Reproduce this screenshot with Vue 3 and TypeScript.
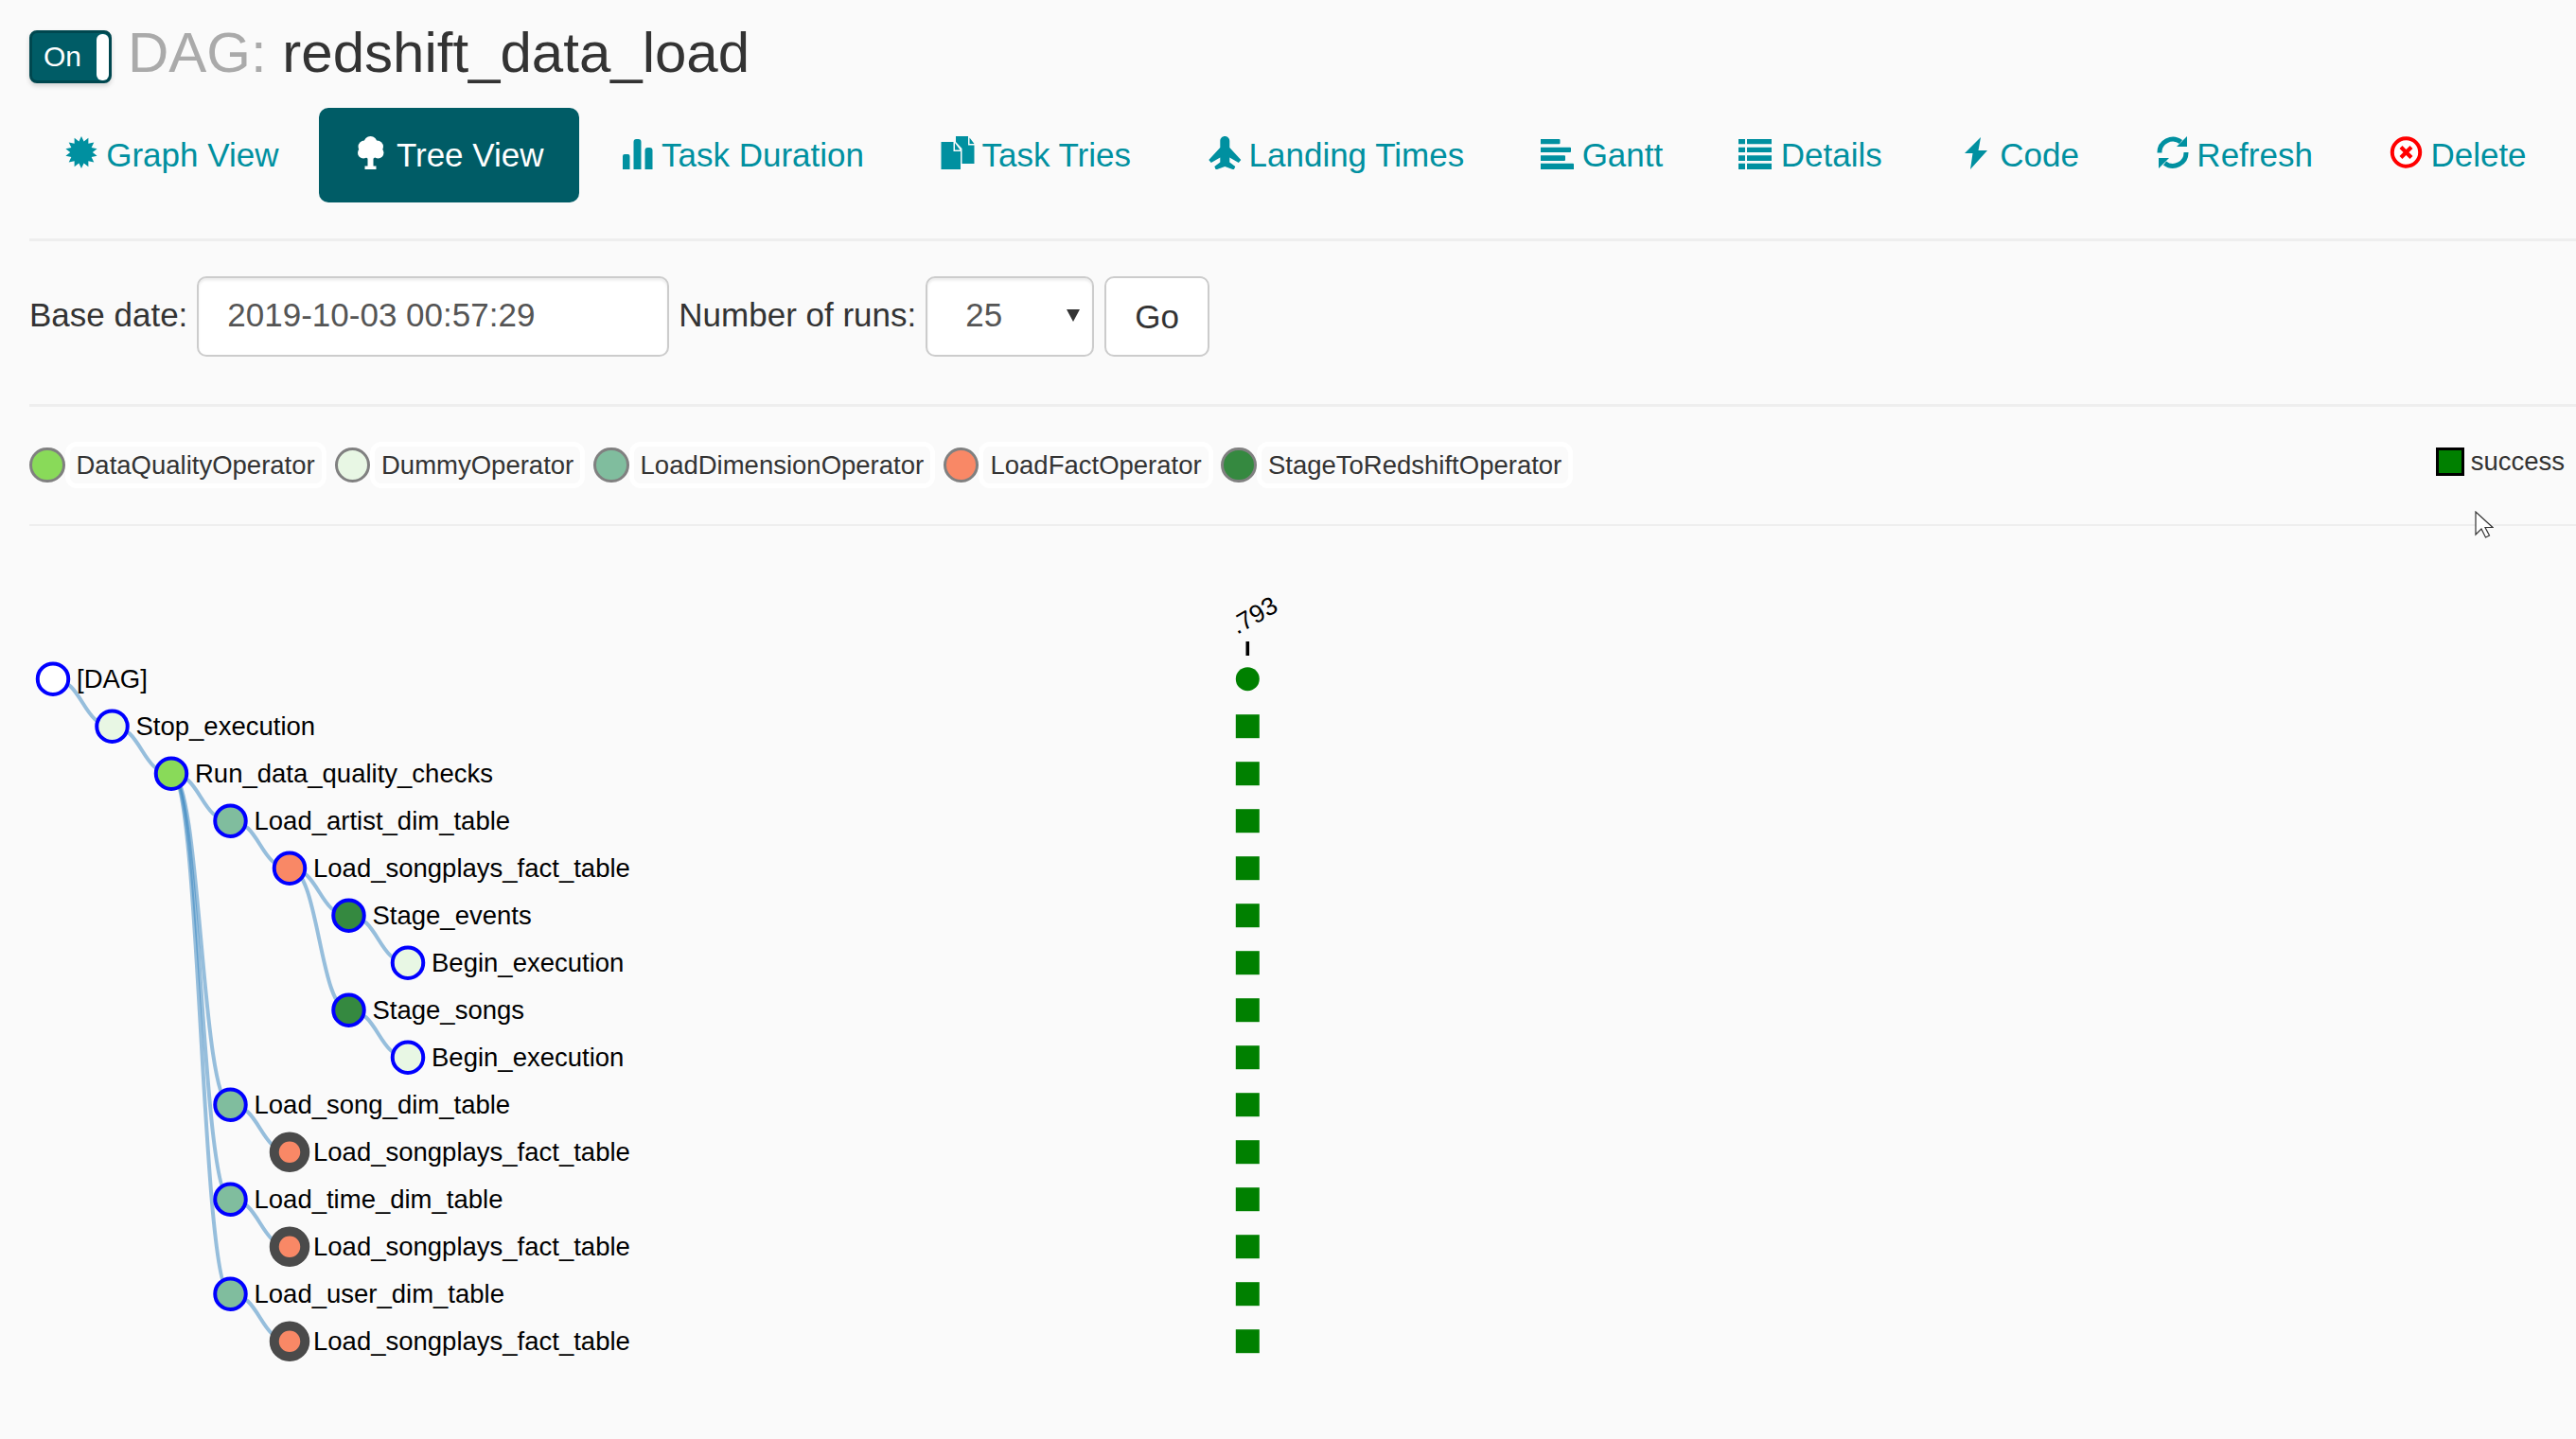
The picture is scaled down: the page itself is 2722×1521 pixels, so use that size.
<script setup lang="ts">
interface NavItem { label: string; icon: string; active?: boolean }
interface LegendItem { label: string; color: string }
interface TreeRow { label: string; depth: number; fill: string; parent: number; collapsed?: boolean }

const DUMMY = '#e8f7e4'
const QUALITY = '#89da59'
const DIM = '#80bd9e'
const FACT = '#f98866'
const STAGE = '#358940'

function starPoints(): string {
  const pts: string[] = []
  const n = 14
  for (let i = 0; i < n * 2; i++) {
    const r = i % 2 === 0 ? 17 : 11.8
    const a = (Math.PI * i) / n - Math.PI / 2
    pts.push(`${(18 + r * Math.cos(a)).toFixed(2)},${(17 + r * Math.sin(a)).toFixed(2)}`)
  }
  return pts.join(' ')
}
const star = starPoints()

const navItems: NavItem[] = [
  { label: 'Graph View', icon: 'graph' },
  { label: 'Tree View', icon: 'tree', active: true },
  { label: 'Task Duration', icon: 'bars' },
  { label: 'Task Tries', icon: 'tries' },
  { label: 'Landing Times', icon: 'plane' },
  { label: 'Gantt', icon: 'gantt' },
  { label: 'Details', icon: 'details' },
  { label: 'Code', icon: 'code' },
  { label: 'Refresh', icon: 'refresh' },
  { label: 'Delete', icon: 'delete' },
]

const legend: LegendItem[] = [
  { label: 'DataQualityOperator', color: QUALITY },
  { label: 'DummyOperator', color: DUMMY },
  { label: 'LoadDimensionOperator', color: DIM },
  { label: 'LoadFactOperator', color: FACT },
  { label: 'StageToRedshiftOperator', color: STAGE },
]

const rows: TreeRow[] = [
  { label: '[DAG]', depth: 0, fill: '#ffffff', parent: -1 },
  { label: 'Stop_execution', depth: 1, fill: DUMMY, parent: 0 },
  { label: 'Run_data_quality_checks', depth: 2, fill: QUALITY, parent: 1 },
  { label: 'Load_artist_dim_table', depth: 3, fill: DIM, parent: 2 },
  { label: 'Load_songplays_fact_table', depth: 4, fill: FACT, parent: 3 },
  { label: 'Stage_events', depth: 5, fill: STAGE, parent: 4 },
  { label: 'Begin_execution', depth: 6, fill: DUMMY, parent: 5 },
  { label: 'Stage_songs', depth: 5, fill: STAGE, parent: 4 },
  { label: 'Begin_execution', depth: 6, fill: DUMMY, parent: 7 },
  { label: 'Load_song_dim_table', depth: 3, fill: DIM, parent: 2 },
  { label: 'Load_songplays_fact_table', depth: 4, fill: FACT, parent: 9, collapsed: true },
  { label: 'Load_time_dim_table', depth: 3, fill: DIM, parent: 2 },
  { label: 'Load_songplays_fact_table', depth: 4, fill: FACT, parent: 11, collapsed: true },
  { label: 'Load_user_dim_table', depth: 3, fill: DIM, parent: 2 },
  { label: 'Load_songplays_fact_table', depth: 4, fill: FACT, parent: 13, collapsed: true },
]

const X0 = 25
const Y0 = 127.7
const nx = (d: number) => X0 + d * 62.5
const ny = (i: number) => Y0 + i * 50

const links = rows
  .map((r, i) => ({ r, i }))
  .filter(({ r }) => r.parent >= 0)
  .map(({ r, i }) => {
    const x0 = nx(rows[r.parent].depth)
    const y0 = ny(r.parent)
    const x1 = nx(r.depth)
    const y1 = ny(i)
    const m = (x0 + x1) / 2
    return `M${x0},${y0} C${m},${y0} ${m},${y1} ${x1},${y1}`
  })

const cellX = 1287.3
</script>

<template>
  <div class="page">
    <div class="title-row">
      <div class="toggle"><span class="toggle-text">On</span><span class="toggle-handle"></span></div>
      <h1 class="title"><span class="title-dag">DAG: </span>redshift_data_load</h1>
    </div>

    <ul class="nav">
      <li v-for="item in navItems" :key="item.label" class="nav-item" :class="{ active: item.active }">
        <svg class="nav-icon" viewBox="0 0 37 35" width="37" height="35">
          <polygon v-if="item.icon === 'graph'" :points="star" />
          <g v-else-if="item.icon === 'tree'">
            <circle cx="17.5" cy="7" r="7" />
            <circle cx="11" cy="11" r="6.5" />
            <circle cx="24.500" cy="11" r="6.5" />
            <circle cx="10" cy="17.5" r="6" />
            <circle cx="25.5" cy="17.5" r="6" />
            <circle cx="17.5" cy="16" r="8" />
            <path d="M14.500 20h6v11.500h3V35h-12v-3.500h3z" />
          </g>
          <path v-else-if="item.icon === 'bars'" d="M4 21a2 2 0 0 1 2-2h3.500a2 2 0 0 1 2 2v14H4zM15.500 6a3 3 0 0 1 3-3h2a3 3 0 0 1 3 3v29h-8zM27.500 15a3 3 0 0 1 3-3h2a3 3 0 0 1 3 3v20h-8z" />
          <path v-else-if="item.icon === 'tries'" d="M17 0h13v9.500h6.500V29h-13V13L17 6zM31.500 1.500l5 6.500h-5zM1.500 6h13v10H22v19H1.500zM16 7l5.500 7.500H16z" />
          <path v-else-if="item.icon === 'plane'" transform="translate(1.8 0)" d="M17.500 0c2.800 0 5 2.200 5 5v7l12 13-2.500 3-9.500-5.500v5l6 4.500-1.500 3.500-9.500-3.500-9.500 3.500-1.500-3.500 6-4.500v-5l-9.500 5.500-2.500-3 12-13V5c0-2.800 2.200-5 5-5z" />
          <path v-else-if="item.icon === 'gantt'" d="M1 3h19.500a1 1 0 0 1 1 1v3.300a1 1 0 0 1-1 1H1zM1 11.700h31a1 1 0 0 1 1 1V16a1 1 0 0 1-1 1H1zM1 20.300h25a1 1 0 0 1 1 1V25a1 1 0 0 1-1 1H1zM1 28.700h34a1 1 0 0 1 1 1V35H1z" />
          <path v-else-if="item.icon === 'details'" d="M0 3h7v5.300H0zM9 3h26v5.300H9zM0 11.700h7V17H0zM9 11.700h26V17H9zM0 20.300h7V26H0zM9 20.300h26V26H9zM0 28.700h7V35H0zM9 28.700h26V35H9z" />
          <path v-else-if="item.icon === 'code'" d="M24 1L7 18h8.500L13 35l18-20h-9.500z" />
          <g v-else-if="item.icon === 'refresh'">
            <path d="M27.500 6A14 14 0 0 0 5 17.500" fill="none" stroke="currentColor" stroke-width="5" />
            <path d="M34 0v11H23z" />
            <path d="M10.500 28.500A14 14 0 0 0 33 17" fill="none" stroke="currentColor" stroke-width="5" />
            <path d="M4 34V23H15z" />
          </g>
          <g v-else-if="item.icon === 'delete'">
            <circle cx="18.500" cy="17" r="14.700" fill="#fff" stroke="#ff0000" stroke-width="4" />
            <path d="M13 11.500l11 11M24 11.500l-11 11" stroke="#ff0000" stroke-width="4.200" fill="none" />
          </g>
        </svg>
        <span class="nav-text">{{ item.label }}</span>
      </li>
    </ul>

    <hr class="rule rule-nav" />

    <div class="form-row">
      <label class="form-label">Base date:</label>
      <div class="input date-input">2019-10-03 00:57:29</div>
      <label class="form-label">Number of runs:</label>
      <div class="input select-input">
        <span>25</span>
        <span class="select-arrow"></span>
      </div>
      <div class="go-button">Go</div>
    </div>

    <hr class="rule rule-form" />

    <div class="legend-row">
      <div class="legend-items">
        <div v-for="item in legend" :key="item.label" class="legend-item">
          <span class="legend-dot" :style="{ background: item.color }"></span>
          <span class="legend-label">{{ item.label }}</span>
        </div>
      </div>
      <div class="state-legend">
        <span class="state-box"></span>
        <span>success</span>
      </div>
    </div>

    <hr class="rule rule-legend" />

    <svg class="cursor" viewBox="0 0 20 29" width="20" height="29">
      <path d="M1 1v24l6-6 4.500 9 4-2-4.500-8.500h8z" fill="#ffffff" stroke="#333" stroke-width="1.200" />
    </svg>

    <svg class="tree" width="2691" height="890" viewBox="0 0 2691 890">
      <g class="tick">
        <rect :x="cellX - 1.800" y="88" width="3.600" height="15" fill="#000" />
        <text class="tick-label" :transform="`translate(${cellX - 11} 81) rotate(-30)`">.793</text>
      </g>
      <path v-for="(d, i) in links" :key="i" :d="d" class="link" />
      <g v-for="(r, i) in rows" :key="i">
        <circle
          :cx="nx(r.depth)"
          :cy="ny(i)"
          r="16.250"
          :fill="r.fill"
          :stroke="r.collapsed ? '#4a4a4a' : '#0000ff'"
          :stroke-width="r.collapsed ? 10 : 4"
        />
        <text class="node-label" :x="nx(r.depth) + 25" :y="ny(i) + 9">{{ r.label }}</text>
        <circle v-if="i === 0" :cx="cellX" :cy="ny(i)" r="12.500" fill="#008000" />
        <rect v-else :x="cellX - 12.500" :y="ny(i) - 12.500" width="25" height="25" fill="#008000" />
      </g>
    </svg>
  </div>
</template>

<style scoped>
.page {
  position: relative;
  box-sizing: border-box;
  width: 2722px;
  height: 1521px;
  padding: 0 0 0 31px;
  background: #fafafa;
  font-family: "Liberation Sans", Arial, sans-serif;
  font-size: 35px;
  color: #333;
  overflow: hidden;
}
.title-row {
  display: flex;
  align-items: flex-start;
  height: 114px;
  padding-top: 32px;
  box-sizing: border-box;
}
.toggle {
  box-sizing: border-box;
  width: 87px;
  height: 56px;
  border: 3px solid #00474f;
  border-radius: 8px;
  background: #005c66;
  display: flex;
  align-items: center;
  justify-content: space-between;
  padding: 1px 0 1px 12px;
  box-shadow: 0 3px 5px rgba(0, 0, 0, 0.15);
}
.toggle-text {
  color: #fff;
  font-size: 30px;
}
.toggle-handle {
  width: 13px;
  height: 49px;
  background: #fff;
  border-radius: 6px;
}
.title {
  margin: -20px 0 0 17px;
  font-size: 60px;
  font-weight: 400;
  line-height: 88px;
  color: #333;
  white-space: nowrap;
}
.title-dag {
  color: #aaa;
}
.nav {
  display: flex;
  list-style: none;
  margin: 0 0 0 -1px;
  padding: 0;
  height: 100px;
}
.nav-item {
  display: flex;
  height: 100px;
  box-sizing: border-box;
  padding: 25px 37.5px;
  line-height: 50px;
  margin-right: 4.8px;
  border-radius: 10px;
  color: #0090a0;
  white-space: nowrap;
}
.nav-item.active {
  background: #005c66;
  color: #fff;
}
.nav-icon {
  margin-top: 5px;
  margin-right: -2px;
  fill: currentColor;
  flex: none;
}
.nav-text {
  margin-left: 9.7px;
}
.rule {
  border: 0;
  margin: 0;
  height: 2.5px;
  background: #eee;
}
.rule-nav {
  margin: 38px 0 0;
}
.form-row {
  display: flex;
  align-items: center;
  height: 85px;
  margin-top: 37.5px;
}
.form-label {
  line-height: 81px;
  height: 85px;
  white-space: nowrap;
}
.input,
.go-button {
  box-sizing: border-box;
  height: 85px;
  border: 2.5px solid #ccc;
  border-radius: 10px;
  background: #fff;
  color: #555;
  display: flex;
  align-items: center;
  box-shadow: inset 0 2.5px 2.5px rgba(0, 0, 0, 0.075);
}
.date-input {
  width: 499px;
  margin: 0 10px;
  padding: 0 30px 3px;
}
.select-input {
  width: 178px;
  margin-left: 10px;
  padding: 0 30px 3px 40px;
  justify-content: space-between;
  position: relative;
}
.select-arrow {
  width: 0;
  height: 0;
  border-left: 7.5px solid transparent;
  border-right: 7.5px solid transparent;
  border-top: 13px solid #333;
  margin-right: -17px;
}
.go-button {
  margin-left: 11px;
  padding: 0 30px;
  color: #333;
  box-shadow: none;
}
.rule-form {
  margin-top: 50px;
}
.legend-row {
  display: flex;
  justify-content: space-between;
  align-items: flex-start;
  height: 124px;
  font-size: 27.5px;
  box-sizing: border-box;
  padding-top: 37.5px;
}
.legend-items {
  display: flex;
  gap: 8.8px;
}
.legend-item {
  display: flex;
  align-items: center;
}
.legend-dot {
  box-sizing: border-box;
  width: 37.5px;
  height: 37.5px;
  border: 3.75px solid #808080;
  border-radius: 50%;
}
.legend-label {
  box-sizing: border-box;
  height: 49px;
  line-height: 39px;
  padding: 0 7px;
  border: 5px solid #fff;
  border-radius: 12px;
  background: #fafafa;
  white-space: nowrap;
}
.state-legend {
  display: flex;
  align-items: center;
  gap: 7px;
  padding-right: 12px;
  margin-top: 4.5px;
}
.state-box {
  box-sizing: border-box;
  width: 30px;
  height: 30px;
  border: 3px solid #000;
  background: #008000;
}
.cursor {
  position: absolute;
  left: 2615px;
  top: 540px;
}
.tree {
  position: absolute;
  left: 31px;
  top: 590px;
}
.link {
  fill: none;
  stroke: #3182bd;
  stroke-width: 4px;
  stroke-opacity: 0.5;
}
.node-label {
  font-size: 27.5px;
  fill: #000;
}
.tick-label {
  font-size: 26.5px;
  fill: #000;
}
</style>
